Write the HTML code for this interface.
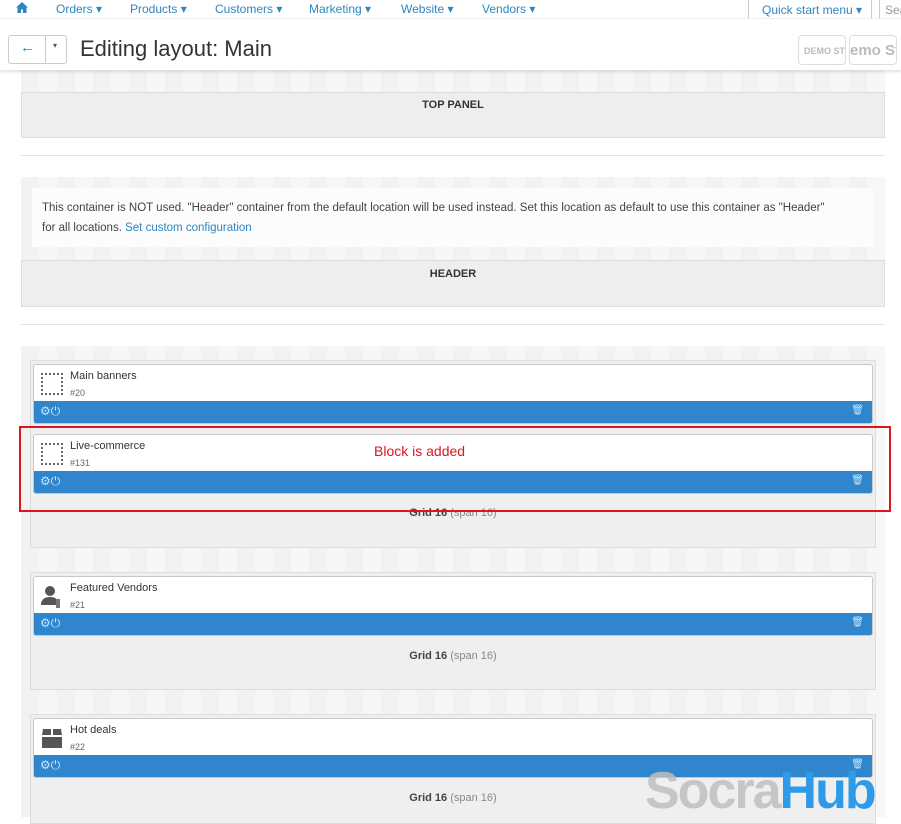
<!DOCTYPE html>
<html><head><meta charset="utf-8"><style>
*{box-sizing:border-box;margin:0;padding:0}
body{width:901px;height:817px;overflow:hidden;background:#fff;font-family:"Liberation Sans",sans-serif;position:relative;color:#333}
.a{position:absolute}
.nav{top:0;left:0;width:901px;height:18px;background:#fff}
.nav span{position:absolute;top:2px;font-size:12px;color:#2e86c1}
.hdr{top:18px;left:0;width:901px;height:52px;background:#fff;border-top:1px solid #eee;box-shadow:0 2px 3px rgba(0,0,0,.12);z-index:5}
.stripe{background:repeating-linear-gradient(90deg,#f2f2f2 0 18px,#f7f7f7 18px 36px)}
.gbox{background:#eee;border:1px solid #ddd;text-align:center;font-size:11px;font-weight:bold;color:#333}
.hr{height:1px;background:#e4e4e4}
.grid{background:#efefef;border:1px solid #ddd}
.blk{background:#fff;border:1px solid #c8c8c8;border-radius:3px;overflow:hidden}
.blk .t{position:absolute;left:36px;top:5px;font-size:11px;color:#333}
.blk .n{position:absolute;left:36px;top:23px;font-size:9px;color:#666}
.blk .bar{position:absolute;left:0;bottom:0;right:0;height:22px;background:#2f86cc}
.ico{position:absolute;left:7px;top:8px;width:22px;height:22px;border:2px dotted #666}
.gl{font-size:11px;color:#444;text-align:center;font-weight:bold}
.gl i{font-style:normal;font-weight:normal;color:#888}
</style></head><body>
<div class="a nav">
<span style="left:16px"><svg width="12" height="11" viewBox="0 0 12 11"><path d="M6 0L0 5.5h1.5V11h3.5V7.5h2V11h3.5V5.5H12z" fill="#2e86c1"/></svg></span>
<span style="left:56px">Orders ▾</span><span style="left:130px">Products ▾</span><span style="left:215px">Customers ▾</span><span style="left:309px">Marketing ▾</span><span style="left:401px">Website ▾</span><span style="left:482px">Vendors ▾</span>
<div class="a" style="left:748px;top:-2px;width:124px;height:24px;border:1px solid #ccc;border-radius:3px;font-size:12px;color:#2e86c1;padding:4px 0 0 13px">Quick start menu ▾</div>
<div class="a" style="left:879px;top:-2px;width:30px;height:24px;border:1px solid #ccc;border-radius:3px;font-size:12px;color:#999;padding:4px 0 0 5px">Sea</div>
</div>
<div class="a hdr">
<div class="a" style="left:8px;top:16px;width:59px;height:29px;border:1px solid #ccc;border-radius:3px"></div>
<div class="a" style="left:45px;top:16px;width:1px;height:29px;background:#ccc"></div>
<div class="a" style="left:20px;top:20px;font-size:15px;color:#2e86c1;font-weight:bold">←</div>
<div class="a" style="left:53px;top:22px;font-size:8px;color:#555">▾</div>
<div class="a" style="left:80px;top:17px;font-size:22px;color:#333">Editing layout: Main</div>
<div class="a" style="left:798px;top:16px;width:48px;height:30px;border:1px solid #ddd;border-radius:4px;font-size:9px;color:#bbb;font-weight:bold;padding:10px 0 0 5px;overflow:hidden;white-space:nowrap">DEMO STO</div>
<div class="a" style="left:849px;top:16px;width:48px;height:30px;border:1px solid #ddd;border-radius:4px;font-size:15px;color:#bbb;font-weight:bold;padding:6px 0 0 0;overflow:hidden;white-space:nowrap">emo Sto</div>
</div>
<div class="a stripe" style="left:21px;top:70px;width:864px;height:22px"></div>
<div class="a gbox" style="left:21px;top:92px;width:864px;height:46px;padding-top:6px">TOP PANEL</div>
<div class="a hr" style="left:21px;top:155px;width:864px"></div>
<div class="a stripe" style="left:21px;top:177px;width:864px;height:84px"></div>
<div class="a" style="left:32px;top:188px;width:841px;height:59px;background:#fcfcfc;font-size:11.5px;line-height:20px;color:#444;padding:10px 10px 0 10px">This container is NOT used. "Header" container from the default location will be used instead. Set this location as default to use this container as "Header"<br>for all locations. <span style="color:#2e86c1">Set custom configuration</span></div>
<div class="a gbox" style="left:21px;top:260px;width:864px;height:47px;padding-top:7px">HEADER</div>
<div class="a hr" style="left:21px;top:324px;width:864px"></div>
<div class="a stripe" style="left:21px;top:346px;width:864px;height:471px"></div>

<div class="a grid" style="left:30px;top:360px;width:846px;height:188px"></div>
<div class="a gl" style="left:30px;top:507px;width:846px">Grid 16 <i>(span 16)</i></div>
<div class="a grid" style="left:30px;top:572px;width:846px;height:118px"></div>
<div class="a gl" style="left:30px;top:650px;width:846px">Grid 16 <i>(span 16)</i></div>
<div class="a grid" style="left:30px;top:714px;width:846px;height:110px"></div>
<div class="a gl" style="left:30px;top:792px;width:846px">Grid 16 <i>(span 16)</i></div>

<div class="a blk" style="left:33px;top:364px;width:840px;height:60px"><div class="ico"></div><div class="t">Main banners</div><div class="n">#20</div><div class="bar"><span class="a" style="left:6px;top:3px;font-size:12px;color:#cfe3f5">⚙⏻</span><span class="a" style="right:8px;top:4px;font-size:10px;color:#cfe3f5">🗑</span></div></div>
<div class="a blk" style="left:33px;top:434px;width:840px;height:60px"><div class="ico"></div><div class="t">Live-commerce</div><div class="n">#131</div><div class="bar"><span class="a" style="left:6px;top:3px;font-size:12px;color:#cfe3f5">⚙⏻</span><span class="a" style="right:8px;top:4px;font-size:10px;color:#cfe3f5">🗑</span></div></div>
<div class="a blk" style="left:33px;top:576px;width:840px;height:60px"><svg class="a" style="left:6px;top:8px" width="24" height="24" viewBox="0 0 24 24"><circle cx="10" cy="6" r="5" fill="#555"/><path d="M1 20c0-6 4-8 9-8s7 2 8 4v4z" fill="#555"/><rect x="16" y="14" width="4" height="9" fill="#777"/></svg><div class="t">Featured Vendors</div><div class="n">#21</div><div class="bar"><span class="a" style="left:6px;top:3px;font-size:12px;color:#cfe3f5">⚙⏻</span><span class="a" style="right:8px;top:4px;font-size:10px;color:#cfe3f5">🗑</span></div></div>
<div class="a blk" style="left:33px;top:718px;width:840px;height:60px"><svg class="a" style="left:7px;top:8px" width="22" height="22" viewBox="0 0 22 22"><path d="M2 2h8v6H1zM12 2h8l1 6h-9zM1 10h20v11H1z" fill="#555"/></svg><div class="t">Hot deals</div><div class="n">#22</div><div class="bar"><span class="a" style="left:6px;top:3px;font-size:12px;color:#cfe3f5">⚙⏻</span><span class="a" style="right:8px;top:4px;font-size:10px;color:#cfe3f5">🗑</span></div></div>

<div class="a" style="left:19px;top:426px;width:872px;height:86px;border:2px solid #e0141e"></div>
<div class="a" style="left:374px;top:443px;font-size:14px;color:#e0141e">Block is added</div>
<div class="a" style="left:645px;top:761px;font-size:52px;font-weight:bold;letter-spacing:-2px;white-space:nowrap"><span style="color:rgba(190,190,190,.85)">Socra</span><span style="color:#2f9be8">Hub</span></div>
</body></html>
